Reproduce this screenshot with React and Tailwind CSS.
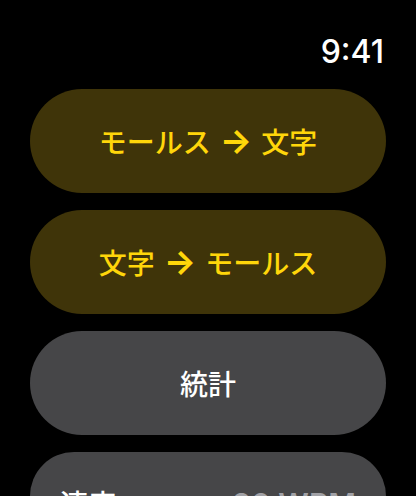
import React from "react";

const jp = { fontFamily: '"Noto Sans CJK JP", "Noto Sans", sans-serif' };
const inter = { fontFamily: 'Inter, "Noto Sans CJK JP", sans-serif' };

function Arrow() {
  return (
    <span className="mx-[9px] text-[34px] font-bold leading-none" style={inter}>
      →
    </span>
  );
}

function Pill({ children, yellow }) {
  return (
    <div
      className={
        "flex h-[104px] items-center justify-center rounded-full text-[28px] font-medium leading-none " +
        (yellow ? "bg-[#3f3409] text-[#ffd60a]" : "bg-[#464648] text-white")
      }
      style={jp}
    >
      {children}
    </div>
  );
}

export default function App() {
  return (
    <div className="h-[496px] w-[416px] overflow-hidden bg-black">
      <div className="flex justify-end pr-[32px] pt-[36px]">
        <span className="text-[32px] font-medium leading-none text-white" style={inter}>
          9:41
        </span>
      </div>
      <div className="mt-[21px] flex flex-col gap-[17px] px-[30px]">
        <Pill yellow>
          <span>モールス</span>
          <Arrow />
          <span>文字</span>
        </Pill>
        <Pill yellow>
          <span>文字</span>
          <Arrow />
          <span>モールス</span>
        </Pill>
        <Pill>統計</Pill>
        <div className="h-[104px] rounded-[44px] bg-[#464648] px-[30px] pt-[37px]">
          <div className="flex items-start justify-between leading-none">
            <span className="text-[28px] font-medium text-white" style={jp}>
              速度
            </span>
            <span className="text-[30px] font-semibold text-[#a1a1a6]" style={inter}>
              20 WPM
            </span>
          </div>
        </div>
      </div>
    </div>
  );
}
